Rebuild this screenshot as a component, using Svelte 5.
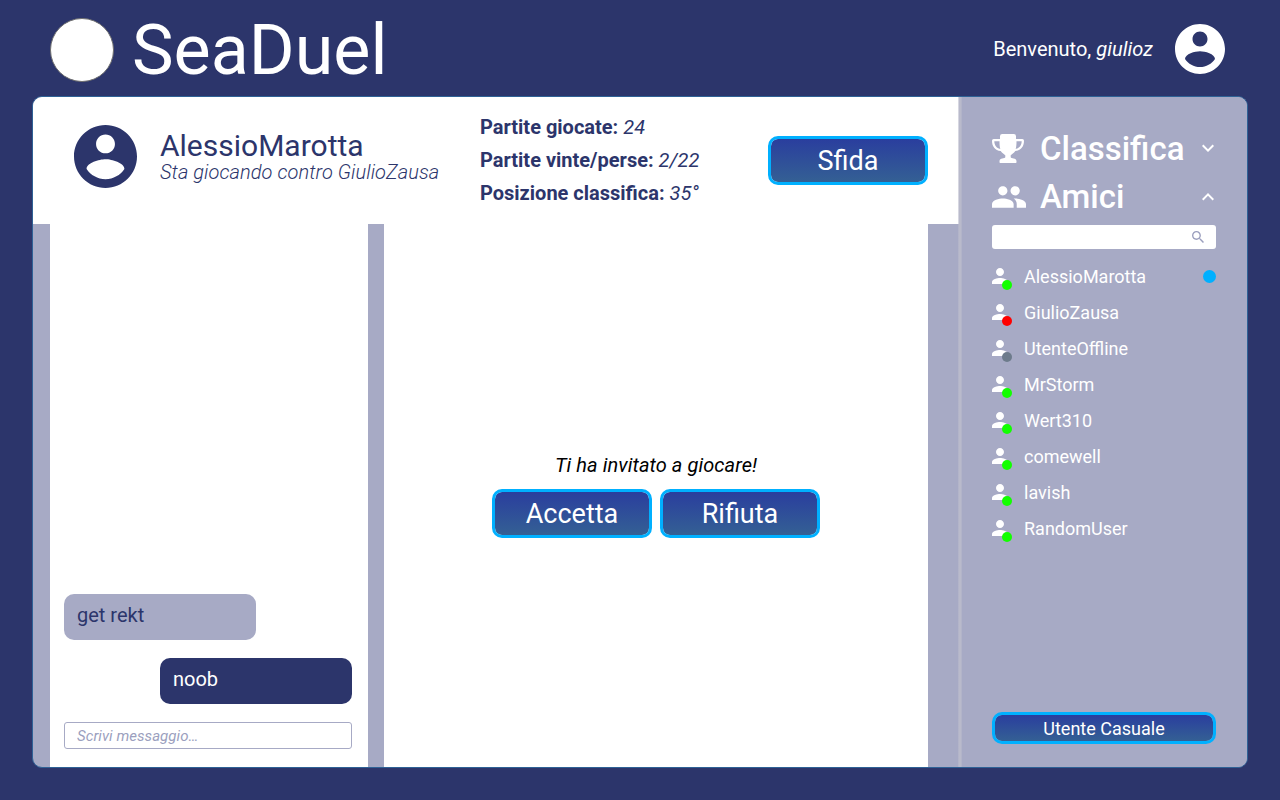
<script>
  const friends = [
    { name: 'AlessioMarotta', status: 'online', unread: true },
    { name: 'GiulioZausa', status: 'busy' },
    { name: 'UtenteOffline', status: 'offline' },
    { name: 'MrStorm', status: 'online' },
    { name: 'Wert310', status: 'online' },
    { name: 'comewell', status: 'online' },
    { name: 'lavish', status: 'online' },
    { name: 'RandomUser', status: 'online' }
  ];
  const stats = [
    ['Partite giocate:', '24'],
    ['Partite vinte/perse:', '2/22'],
    ['Posizione classifica:', '35°']
  ];
  const account =
    'M12 2C6.48 2 2 6.48 2 12s4.48 10 10 10 10-4.48 10-10S17.52 2 12 2zm0 3c1.66 0 3 1.34 3 3s-1.34 3-3 3-3-1.34-3-3 1.34-3 3-3zm0 14.2c-2.5 0-4.71-1.28-6-3.22.03-1.99 4-3.08 6-3.08 1.99 0 5.97 1.09 6 3.08-1.29 1.94-3.5 3.22-6 3.22z';
</script>

<div class="page">
  <header class="top">
    <div class="logo"></div>
    <h1>SeaDuel</h1>
    <p class="welcome">Benvenuto, <em>giulioz</em></p>
    <svg class="me" viewBox="2 2 20 20"><path d={account} /></svg>
  </header>

  <div class="frame">
    <main>
      <section class="profile">
        <svg class="avatar" viewBox="2 2 20 20"><path d={account} /></svg>
        <div class="who">
          <h2>AlessioMarotta</h2>
          <p>Sta giocando contro GiulioZausa</p>
        </div>
        <div class="stats">
          {#each stats as [label, value]}
            <p><b>{label}</b> <em>{value}</em></p>
          {/each}
        </div>
        <button class="btn">Sfida</button>
      </section>
      <div class="columns">
        <section class="chat">
          <div class="msg theirs">get rekt</div>
          <div class="msg mine">noob</div>
          <input class="write" placeholder="Scrivi messaggio…" />
        </section>
        <section class="game">
          <p>Ti ha invitato a giocare!</p>
          <div class="actions">
            <button class="btn">Accetta</button>
            <button class="btn">Rifiuta</button>
          </div>
        </section>
      </div>
    </main>

    <aside>
      <div class="heading">
        <svg class="trophy" viewBox="0 0 32 29">
          <path d="M10.200 0h11.600Q24 0 24 2.200V5h6.300Q32 5 32 6.700C32 12.500 29 16.300 23.300 17 21.800 19.300 19.800 20.300 18.700 21.200V23.300C19 24.600 24.500 23.800 24.500 27.200V28.200Q24.500 29 23.700 29H8.300Q7.500 29 7.500 28.200V27.200C7.500 23.800 13 24.600 13.300 23.300V21.200C12.200 20.300 10.200 19.300 8.700 17 3 16.300 0 12.500 0 6.700Q0 5 1.700 5H8V2.200Q8 0 10.200 0zM2.300 7.200C2.500 11.200 4.300 13.900 8.300 14.900 7.600 12.600 7.500 10 7.500 7.200zM29.700 7.200H24.500C24.500 10 24.400 12.600 23.700 14.900 27.700 13.900 29.500 11.200 29.700 7.200z" fill-rule="evenodd" />
        </svg>
        <h3>Classifica</h3>
        <svg class="chev down" viewBox="6 8 12 8"><path d="M16.590 8.590L12 13.170 7.410 8.590 6 10l6 6 6-6z" /></svg>
      </div>
      <div class="heading">
        <svg class="people" viewBox="1 5 22 14">
          <path d="M16 11c1.660 0 2.990-1.340 2.990-3S17.660 5 16 5c-1.660 0-3 1.340-3 3s1.340 3 3 3zm-8 0c1.660 0 2.990-1.340 2.990-3S9.660 5 8 5C6.340 5 5 6.340 5 8s1.340 3 3 3zm0 2c-2.330 0-7 1.170-7 3.500V19h14v-2.500c0-2.330-4.670-3.500-7-3.500zm8 0c-.29 0-.62.02-.97.05 1.160.84 1.970 1.970 1.970 3.450V19h6v-2.500c0-2.330-4.670-3.500-7-3.500z" />
        </svg>
        <h3>Amici</h3>
        <svg class="chev" viewBox="6 8 12 8"><path d="M12 8l-6 6 1.410 1.410L12 10.830l4.590 4.580L18 14z" /></svg>
      </div>
      <div class="search">
        <svg viewBox="3 3 17.500 17.500"><path d="M15.500 14h-.79l-.28-.27C15.410 12.590 16 11.110 16 9.500 16 5.910 13.090 3 9.500 3S3 5.910 3 9.500 5.910 16 9.500 16c1.610 0 3.090-.59 4.230-1.570l.27.28v.79l5 4.990L20.490 19l-4.990-5zm-6 0C7.010 14 5 11.990 5 9.500S7.010 5 9.500 5 14 7.010 14 9.500 11.990 14 9.500 14z" /></svg>
      </div>
      <ul>
        {#each friends as f}
          <li>
            <span class="person">
              <svg viewBox="4 4 16 16"><path d="M12 12c2.210 0 4-1.790 4-4s-1.790-4-4-4-4 1.790-4 4 1.790 4 4 4zm0 2c-2.670 0-8 1.340-8 4v2h16v-2c0-2.660-5.330-4-8-4z" /></svg>
              <i class={f.status}></i>
            </span>
            <span class="name">{f.name}</span>
            {#if f.unread}<span class="unread"></span>{/if}
          </li>
        {/each}
      </ul>
      <button class="btn random">Utente Casuale</button>
    </aside>
  </div>
</div>

<style>
  :global(body) { margin: 0; }
  .page {
    width: 1280px;
    height: 800px;
    box-sizing: border-box;
    padding: 0 32px 32px;
    background: #2c356b;
    color: #fff;
    font-family: Roboto, sans-serif;
    overflow: hidden;
    display: flex;
    flex-direction: column;
  }
  h1, h2, h3, p, ul { margin: 0; padding: 0; font-weight: 400; }
  em { letter-spacing: 0.07px; }
  svg { display: block; fill: currentColor; flex: none; }
  .top {
    height: 96px;
    flex: none;
    display: flex;
    align-items: center;
    padding: 0 23px 0 18px;
    box-sizing: border-box;
  }
  .logo {
    width: 62px;
    height: 62px;
    border: 1px solid #707070;
    border-radius: 50%;
    background: #fff;
    margin-top: 4px;
  }
  h1 { font-size: 70px; line-height: 84px; margin: 4px 0 0 18px; }
  .welcome { font-size: 20px; line-height: 24px; margin: 2px 22px 0 auto; }
  .me { width: 50px; height: 50px; margin-top: 2px; }
  .frame {
    flex: 1;
    display: flex;
    border: 1px solid #2f6296;
    border-radius: 10px;
    overflow: hidden;
    background: #a7aac5;
  }
  main { width: 926px; flex: none; display: flex; flex-direction: column; }
  .profile {
    height: 127px;
    flex: none;
    display: flex;
    box-sizing: border-box;
    padding: 0 31px 0 41px;
    align-items: flex-start;
    background: #fff;
    color: #2c356b;
  }
  .avatar { width: 63px; height: 63px; margin-top: 28px; }
  .who { margin: 31px 0 0 23px; width: 320px; white-space: nowrap; }
  h2 { font-size: 30px; line-height: 35px; }
  .who p {
    font-size: 20px;
    line-height: 24px;
    font-weight: 300;
    font-style: italic;
    letter-spacing: 0.07px;
    margin-top: -3px;
  }
  .stats { padding-top: 14px; white-space: nowrap; font-size: 20px; line-height: 33px; }
  .stats b { font-weight: 700; }
  .btn {
    font: 400 27px/44px Roboto, sans-serif;
    width: 160px;
    height: 49px;
    box-sizing: border-box;
    padding: 0;
    color: #fff;
    border: 3px solid #00b0ff;
    border-radius: 10px;
    background: linear-gradient(#2a3e9e, #346094) padding-box;
    display: block;
  }
  .profile .btn { margin: 39px 0 0 auto; }
  .columns { flex: 1; display: flex; gap: 16px; padding: 0 31px 0 17px; }
  .chat {
    width: 318px;
    box-sizing: border-box;
    padding: 0 16px 18px 14px;
    background: #fff;
    display: flex;
    flex-direction: column;
    justify-content: flex-end;
  }
  .msg {
    width: 192px;
    height: 46px;
    box-sizing: border-box;
    padding: 9px 13px;
    border-radius: 10px;
    font-size: 20px;
    line-height: 24px;
    margin-bottom: 18px;
  }
  .theirs { background: #a7aac5; color: #2c356b; }
  .mine { background: #2c356b; align-self: flex-end; }
  .write {
    height: 27px;
    box-sizing: border-box;
    border: 1px solid #a7aac5;
    border-radius: 3px;
    padding: 0 12px;
    font: italic 400 15px Roboto, sans-serif;
    letter-spacing: 0.06px;
    background: #fff;
  }
  .write::placeholder { color: #9b9fbe; opacity: 1; }
  .game {
    width: 544px;
    background: #fff;
    display: flex;
    flex-direction: column;
    align-items: center;
    padding-top: 229px;
    box-sizing: border-box;
  }
  .game p {
    color: #000;
    font-size: 20px;
    line-height: 24px;
    font-style: italic;
    letter-spacing: 0.07px;
  }
  .actions { display: flex; gap: 8px; margin-top: 12px; }
  aside {
    flex: 1;
    display: flex;
    flex-direction: column;
    margin-left: -1px;
    padding: 28px 31px 23px 34px;
    background: linear-gradient(
      90deg,
      rgba(187, 188, 205, 0.6) 1px,
      #b9bacb 1px 3px,
      #b2b4c9 3px 4px,
      #a7aac5 4px
    );
  }
  .heading { height: 48px; display: flex; align-items: center; }
  .heading h3 { font-size: 33px; line-height: 40px; font-weight: 500; }
  .trophy { width: 32px; height: 29px; margin: -1px 16px 0 0; }
  .people { width: 34px; height: 22px; margin-right: 14px; }
  .chev { width: 12px; height: 8px; margin: 0 2px 0 auto; }
  .chev.down { margin-bottom: 2px; }
  .search {
    height: 24px;
    margin-top: 4px;
    border-radius: 3px;
    background: #fff;
    color: #9b9fbe;
    display: flex;
    align-items: center;
    justify-content: flex-end;
    padding-right: 12px;
  }
  .search svg { width: 12px; height: 12px; }
  ul { list-style: none; margin-top: 10px; }
  li { height: 36px; display: flex; align-items: center; }
  .person { position: relative; width: 16px; height: 16px; margin-bottom: 2px; }
  .person svg { width: 16px; height: 16px; }
  .person i {
    position: absolute;
    left: 10px;
    top: 12px;
    width: 10px;
    height: 10px;
    border-radius: 50%;
  }
  .online { background: #12ff00; }
  .busy { background: #f00; }
  .offline { background: #6d7b8b; }
  .name { font-size: 18px; line-height: 22px; margin-left: 16px; }
  .unread {
    width: 13px;
    height: 13px;
    border-radius: 50%;
    background: #00b0ff;
    margin: 0 0 2px auto;
  }
  .random {
    width: 100%;
    height: 32px;
    font-size: 18px;
    line-height: 24px;
    padding-top: 2px;
    margin-top: auto;
  }
</style>
